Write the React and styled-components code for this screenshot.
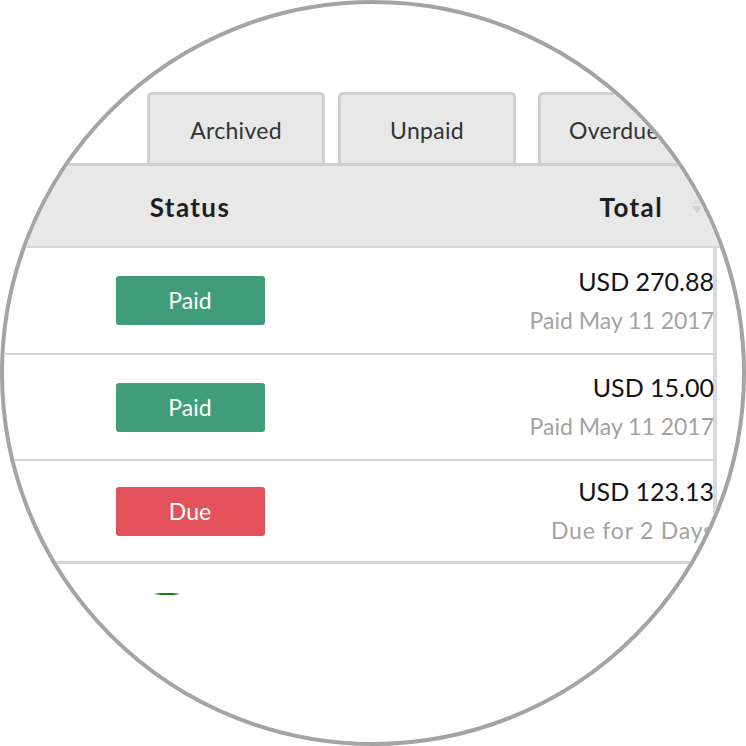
import React from "react";
import styled, { createGlobalStyle } from "styled-components";

const Global = createGlobalStyle`
  html, body { margin: 0; padding: 0; background: #ffffff; }
  body { font-family: "Lato", "Open Sans", sans-serif; }
  * { box-sizing: border-box; }
`;

const Lens = styled.div`
  width: 746px;
  height: 746px;
  border: 4px solid #a4a4a4;
  border-radius: 50%;
  overflow: hidden;
  background: #ffffff;
  padding-top: 88px;
`;

const TabBar = styled.div`
  display: flex;
  align-items: flex-end;
  gap: 13px;
  padding-left: 143px;
`;

const Tab = styled.div`
  flex: none;
  width: 178px;
  height: 71px;
  margin-left: ${(p) => p.$shift || 0}px;
  border: 3px solid #d0d0d0;
  border-bottom: none;
  border-radius: 5px 5px 0 0;
  background: #e8e8e8;
  display: flex;
  align-items: center;
  justify-content: ${(p) => (p.$lead ? "flex-start" : "center")};
  padding-left: ${(p) => p.$lead || 0}px;
  padding-top: 2px;
  font-size: 23px;
  letter-spacing: 0.3px;
  color: #333333;
  white-space: nowrap;
`;

const HeaderBand = styled.div`
  border-top: 3px solid #d0d0d0;
  border-bottom: 2px solid #d6d6d6;
  background: #e8e8e8;
  height: 85px;
`;

const HeaderRow = styled.div`
  width: 709px;
  height: 80px;
  display: grid;
  grid-template-columns: 372px 1fr;
  align-items: center;
`;

const HeadCell = styled.div`
  display: flex;
  align-items: center;
  justify-content: ${(p) => (p.$end ? "flex-end" : "center")};
  gap: 29px;
  padding-right: ${(p) => (p.$end ? 11 : 0)}px;
  padding-top: 1px;
  font-size: 26px;
  font-weight: 700;
  letter-spacing: 1.4px;
  color: #1e1e1e;
`;

const Body = styled.div`
  width: 713px;
  border-right: 4px solid #d9d9d9;
`;

const Row = styled.div`
  display: grid;
  grid-template-columns: 372px 1fr;
  align-items: center;
  height: ${(p) => p.$h}px;
  border-bottom: ${(p) => p.$line}px solid #d6d6d6;
  box-sizing: content-box;
`;

const StatusCell = styled.div`
  display: flex;
  justify-content: center;
`;

const Badge = styled.div`
  width: 149px;
  height: 49px;
  border-radius: 3px;
  background: ${(p) => (p.$tone === "due" ? "#e3525a" : "#3f9e79")};
  color: #ffffff;
  font-size: 23px;
  display: flex;
  align-items: center;
  justify-content: center;
  padding-bottom: 1px;
`;

const AmountCell = styled.div`
  display: flex;
  flex-direction: column;
  align-items: flex-end;
  white-space: nowrap;
  margin-right: -1px;
`;

const Amount = styled.div`
  font-size: 25px;
  line-height: 39px;
  color: #141414;
`;

const Note = styled.div`
  font-size: 23px;
  line-height: 39px;
  color: #a3a3a3;
  letter-spacing: ${(p) => p.$spread || 0}px;
`;

const TailRow = styled.div`
  padding-top: 29px;
  padding-left: 151px;
`;

const Mark = styled.div`
  width: 24px;
  height: 2px;
  border-radius: 1px;
  background: linear-gradient(90deg, rgba(20,130,20,0.3), #128012 25%, #128012 75%, rgba(20,130,20,0.3));
`;

const SortIcon = () => (
  <svg width="10" height="20" viewBox="0 0 10 20" aria-hidden="true">
    <path d="M5 1 L10 7 L0 7 Z" fill="#e0e0e0" />
    <path d="M0 9 L10 9 L5 17 Z" fill="#d2d2d2" />
  </svg>
);

const rows = [
  { tone: "paid", label: "Paid", amount: "USD 270.88", note: "Paid May 11 2017", h: 105, line: 2, spread: 0 },
  { tone: "paid", label: "Paid", amount: "USD 15.00", note: "Paid May 11 2017", h: 104, line: 2, spread: 0 },
  { tone: "due", label: "Due", amount: "USD 123.13", note: "Due for 2 Days", h: 100, line: 3, spread: 0.8 },
];

export default function App() {
  return (
    <>
      <Global />
      <Lens>
        <TabBar>
          <Tab>Archived</Tab>
          <Tab>Unpaid</Tab>
          <Tab $shift={9} $lead={28}>Overdue</Tab>
        </TabBar>
        <HeaderBand>
          <HeaderRow>
            <HeadCell>Status</HeadCell>
            <HeadCell $end>
              <span>Total</span>
              <SortIcon />
            </HeadCell>
          </HeaderRow>
        </HeaderBand>
        <Body>
          {rows.map((r, i) => (
            <Row key={i} $h={r.h} $line={r.line}>
              <StatusCell>
                <Badge $tone={r.tone}>{r.label}</Badge>
              </StatusCell>
              <AmountCell>
                <Amount>{r.amount}</Amount>
                <Note $spread={r.spread}>{r.note}</Note>
              </AmountCell>
            </Row>
          ))}
        </Body>
        <TailRow>
          <Mark />
        </TailRow>
      </Lens>
    </>
  );
}
